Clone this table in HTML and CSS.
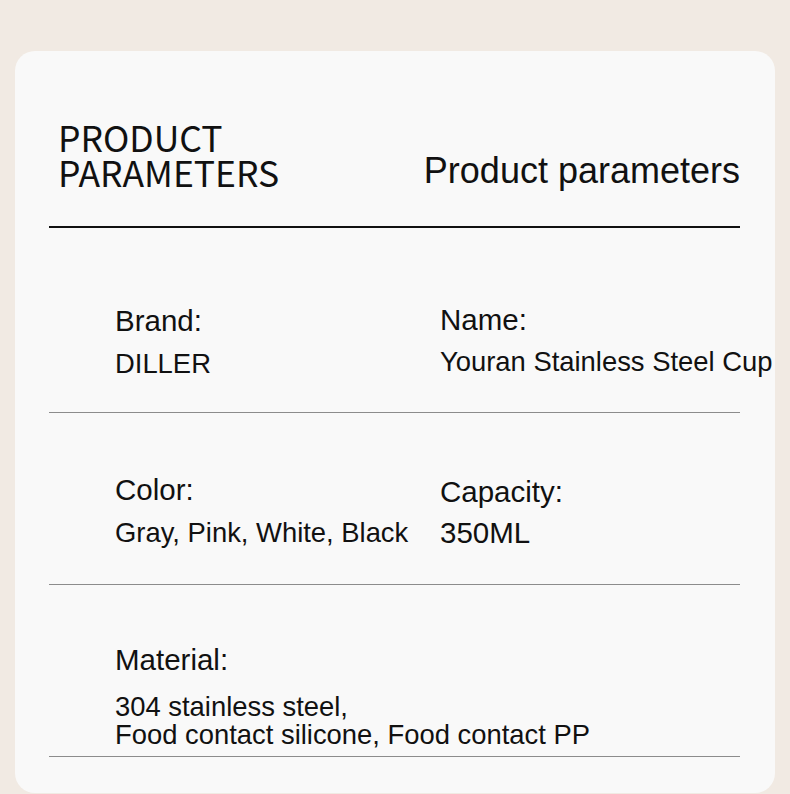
FILE: index.html
```html
<!DOCTYPE html>
<html lang="en">
<head>
<meta charset="utf-8">
<title>Product parameters</title>
<link rel="stylesheet" href="styles.css">
</head>
<body>
<div class="card">
  <div class="head">
    <h1 class="title-en">PRODUCT<br>PARAMETERS</h1>
    <h2 class="title">Product parameters</h2>
  </div>
  <div class="row row1">
    <div class="cell">
      <div class="label">Brand:</div>
      <div class="value">DILLER</div>
    </div>
    <div class="cell cell-r1">
      <div class="label">Name:</div>
      <div class="value">Youran Stainless Steel Cup</div>
    </div>
  </div>
  <div class="row row2">
    <div class="cell">
      <div class="label">Color:</div>
      <div class="value">Gray, Pink, White, Black</div>
    </div>
    <div class="cell cell-r2">
      <div class="label">Capacity:</div>
      <div class="value value-lg">350ML</div>
    </div>
  </div>
  <div class="row row3">
    <div class="cell">
      <div class="label">Material:</div>
      <div class="value value-multi">304 stainless steel,<br>Food contact silicone, Food contact PP</div>
    </div>
  </div>
</div>
</body>
</html>
```
FILE: styles.css
```css
html, body {
  margin: 0;
  padding: 0;
}
body {
  background: #f1eae3;
  width: 790px;
  height: 794px;
  overflow: hidden;
  font-family: "Liberation Sans", Arial, sans-serif;
  color: #111;
}
.card {
  margin: 51px 15px 0;
  height: 742px;
  box-sizing: border-box;
  background: #f9f9f9;
  border-radius: 20px;
  padding: 0 35px 0 34px;
}
.head {
  display: flex;
  justify-content: space-between;
  align-items: flex-start;
  height: 175px;
  border-bottom: 2px solid #111;
  padding-left: 9px;
}
.title-en {
  margin: 68px 0 0;
  font-family: "Noto Sans CJK SC", "Noto Sans", sans-serif;
  font-weight: 400;
  font-size: 35.5px;
  line-height: 35px;
  color: #111;
}
.title {
  margin: 99px 0 0;
  font-weight: 400;
  font-size: 36px;
  line-height: 42px;
  color: #111;
}
.row {
  display: grid;
  grid-template-columns: 325px 1fr;
  padding-left: 66px;
  border-bottom: 1px solid #8c8c8c;
  box-sizing: border-box;
}
.row1 { height: 185px; padding-top: 76px; }
.row2 { height: 172px; padding-top: 60px; }
.row3 { height: 172px; padding-top: 58px; }
.cell {
  white-space: nowrap;
}
.label {
  font-size: 29.5px;
  line-height: 34px;
}
.value {
  font-size: 27.4px;
  line-height: 32px;
  margin-top: 10px;
}
.cell-r1 { margin-top: -1px; }
.cell-r1 .value { margin-top: 9px; }
.cell-r2 { margin-top: 2px; }
.value-lg {
  font-size: 29.5px;
  line-height: 34px;
  margin-top: 7px;
}
.value-multi {
  line-height: 28px;
  margin-top: 16px;
}
```
